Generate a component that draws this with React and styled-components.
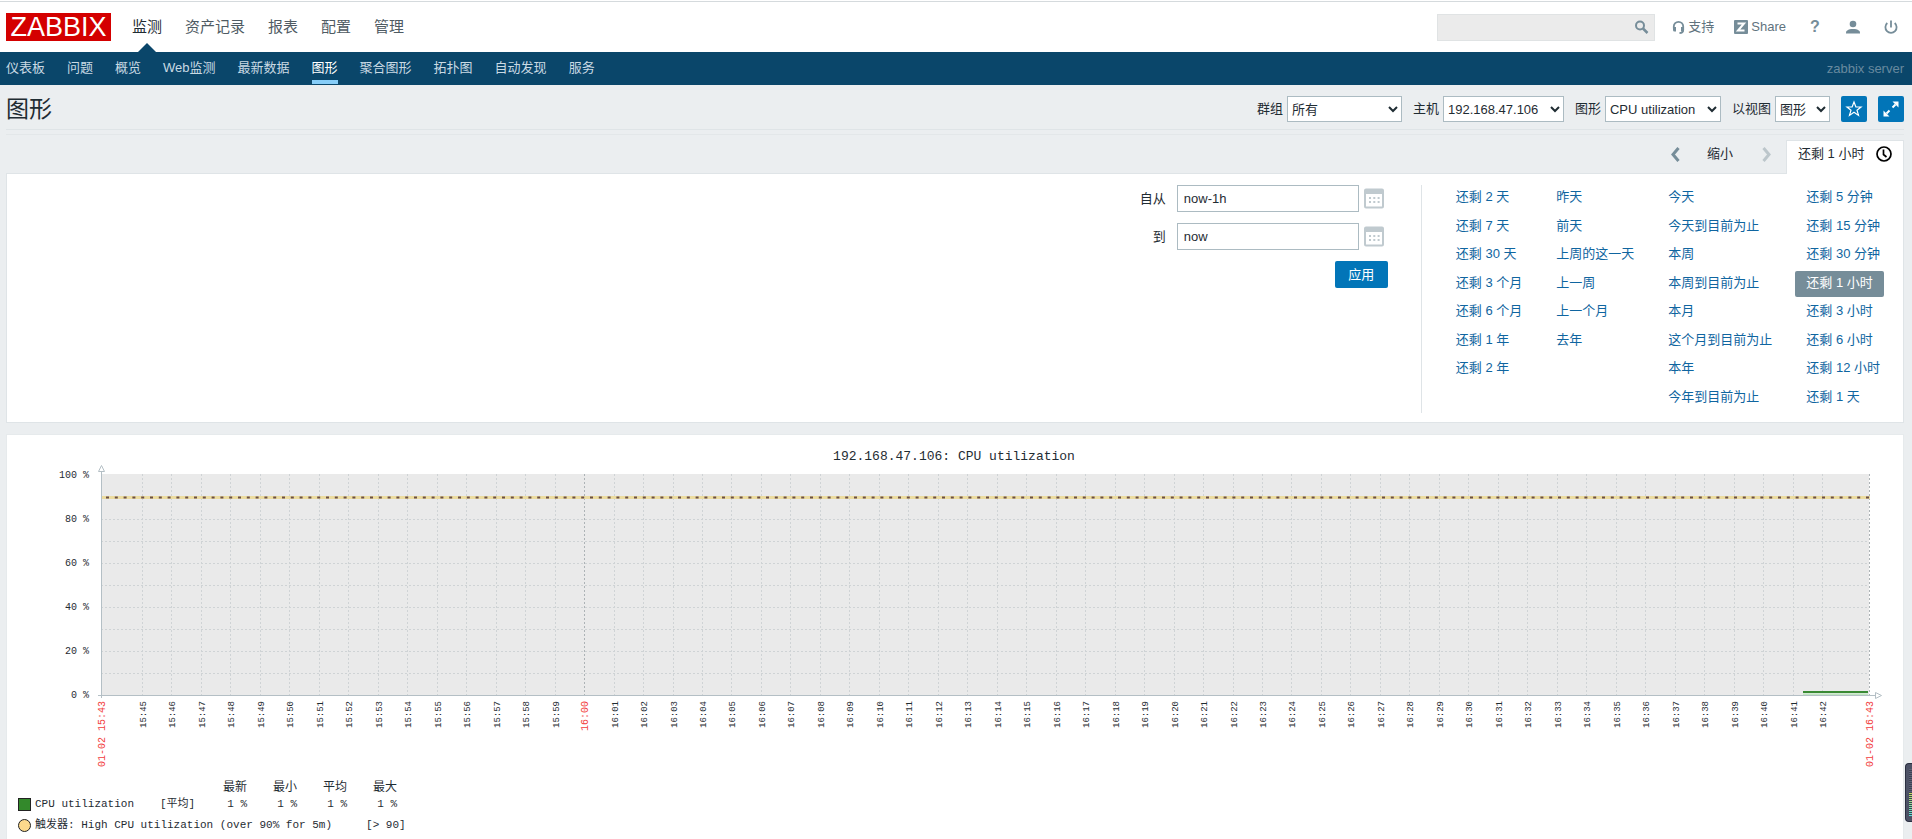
import React from 'react';
import styled, { createGlobalStyle, css } from 'styled-components';

const sans = '"Liberation Sans", "Noto Sans CJK SC", Arial, sans-serif';
const mono = '"Liberation Mono", "Noto Sans CJK SC", monospace';

const GlobalStyle = createGlobalStyle`
  *, *::before, *::after { box-sizing: border-box; }
  body { margin: 0; background: #ebeef0; color: #1f2c33; font: 13px/20px ${sans}; }
  button, input, select { font: inherit; color: inherit; }
  a { text-decoration: none; }
  svg { display: block; flex: none; }
`;

const Page = styled.div`
  display: flex;
  flex-direction: column;
  min-height: 100vh;
`;

const Masthead = styled.header`
  padding-top: 1px;
  background: #fff;
`;

const TopBar = styled.div`
  display: flex;
  align-items: center;
  height: 51px;
  padding: 0 12px 0 6px;
  border-top: 1px solid #d5dadd;
`;

const Logo = styled.a`
  width: 105px;
  height: 28px;
  margin-right: 21px;
  background: #d40000;
  color: #fff;
  font-size: 27px;
  line-height: 29px;
  text-align: center;
`;

const MainNav = styled.nav`
  display: flex;
  gap: 23px;
  align-self: stretch;
`;

const MainLink = styled.a`
  position: relative;
  display: flex;
  align-items: center;
  font-size: 15px;
  line-height: 20px;
  color: ${p => (p.$active ? '#1f2c33' : '#4f5b63')};
  ${p => p.$active && css`
    &::after {
      content: '';
      position: absolute;
      bottom: 0;
      left: 50%;
      margin-left: -9px;
      border: 9px solid transparent;
      border-top: 0;
      border-bottom-color: #0a466a;
    }
  `}
`;

const SearchForm = styled.form`
  display: flex;
  align-items: center;
  width: 218px;
  height: 27px;
  margin-left: auto;
  padding-right: 5px;
  background: #ebebeb;
  border: 1px solid #e0e3e4;
`;

const SearchInput = styled.input`
  flex: 1;
  min-width: 0;
  height: 100%;
  padding: 0 6px;
  border: 0;
  background: none;
`;

const BareButton = styled.button`
  display: flex;
  align-items: center;
  justify-content: center;
  padding: 0;
  border: 0;
  background: none;
  color: #768d99;
`;

const Tools = styled.nav`
  display: flex;
  align-items: center;
  gap: 20px;
  padding-left: 17px;
`;

const ToolLink = styled.a`
  display: flex;
  align-items: center;
  gap: 3px;
  color: #5f737e;
`;

const ToolIcon = styled.a`
  display: flex;
  justify-content: center;
  width: 18px;
  color: #768d99;
  font-size: 16px;
  font-weight: 700;
`;

const SubBar = styled.div`
  display: flex;
  align-items: stretch;
  justify-content: space-between;
  height: 33px;
  padding: 0 8px 0 6px;
  background: #0a466a;
`;

const SubNav = styled.nav`
  display: flex;
  gap: 22px;
`;

const SubLink = styled.a`
  display: flex;
  align-items: center;
  padding-top: 4px;
  border-bottom: 4px solid ${p => (p.$active ? '#86cdf8' : 'transparent')};
  margin-bottom: 1px;
  color: ${p => (p.$active ? '#fff' : '#c9dae4')};
`;

const ServerName = styled.span`
  align-self: center;
  color: #688a9f;
`;

const TitleRow = styled.div`
  display: flex;
  align-items: center;
  height: 45px;
  margin: 0 8px 0 6px;
  padding-top: 4px;
  border-bottom: 1px solid #dfe4e7;
`;

const Title = styled.h1`
  margin: 0 auto 0 0;
  font-size: 23px;
  line-height: 28px;
  font-weight: 400;
`;

const Filters = styled.form`
  display: flex;
  align-items: center;
  gap: 11px;
`;

const Field = styled.label`
  display: flex;
  align-items: center;
  gap: 4px;
`;

const Select = styled.select`
  width: ${p => p.$width}px;
  height: 26px;
  padding: 0 4px 0 0;
  border: 1px solid #acbbc2;
  border-radius: 0;
  background-color: #fff;
`;

const IconButton = styled.button`
  display: flex;
  align-items: center;
  justify-content: center;
  width: 26px;
  height: 26px;
  padding: 0;
  border: 0;
  border-radius: 2px;
  background: #0275b8;
  color: #fff;
`;

const TimeBar = styled.div`
  display: flex;
  justify-content: flex-end;
  align-items: center;
  height: 39px;
  margin: 4px 8px 0 6px;
  border-top: 1px solid #e3e7e9;
`;

const ZoomButton = styled(BareButton)`
  margin-right: ${p => p.$after}px;
  color: ${p => p.$color};
`;

const TimeTab = styled.a`
  position: relative;
  display: flex;
  align-self: flex-end;
  align-items: center;
  justify-content: space-between;
  width: 118px;
  height: 34px;
  margin-bottom: -1px;
  padding: 0 11px 8px 11px;
  border: 1px solid #dfe4e7;
  border-bottom: 0;
  background: #fff;
  color: #1f2c33;
`;

const FilterPanel = styled.section`
  display: flex;
  justify-content: flex-end;
  margin: 0 8px 0 6px;
  padding: 11px 12px 9px;
  background: #fff;
  border: 1px solid #dfe4e7;
`;

const RangeForm = styled.form`
  display: flex;
  flex-direction: column;
  gap: 11px;
  padding-right: 33px;
`;

const RangeRow = styled.div`
  display: flex;
  align-items: center;
  justify-content: flex-end;
`;

const RangeInput = styled.input`
  width: 182px;
  height: 27px;
  margin: 0 5px 0 11px;
  padding: 0 6px;
  border: 1px solid #acbbc2;
`;

const CalendarButton = styled(BareButton)`
  width: 20px;
  margin-right: 4px;
  color: #c0cacf;
`;

const ApplyButton = styled.button`
  align-self: flex-end;
  width: 53px;
  height: 27px;
  padding: 0;
  border: 0;
  border-radius: 2px;
  background: #0275b8;
  color: #fff;
`;

const Presets = styled.div`
  display: flex;
  gap: 12px;
  height: 228px;
  padding: 0 0 2px 23px;
  border-left: 1px solid #dfe4e7;
`;

const PresetColumn = styled.ul`
  display: grid;
  grid-template-rows: repeat(8, 26px);
  justify-items: start;
  align-content: space-between;
  margin: 0;
  padding: 0;
  list-style: none;
`;

const Preset = styled.a`
  display: block;
  padding: 0 11px 2px;
  border-radius: 2px;
  line-height: 24px;
  white-space: nowrap;
  color: ${p => (p.$active ? '#fff' : '#0f65a0')};
  background: ${p => (p.$active ? '#768d99' : 'none')};
`;

const ChartPanel = styled.section`
  flex: 1;
  margin: 11px 8px 0 6px;
  border: 1px solid #e6eaec;
  border-bottom: 0;
  background: #fff;
`;

const Chart = styled.svg`
  width: 100%;
  height: auto;
  font-family: ${mono};
  font-size: 10px;
  fill: #1f2c33;
`;

const Legend = styled.div`
  padding-left: 11px;
  font-family: ${mono};
  font-size: 11px;
  line-height: 16px;
`;

const LegendTable = styled.table`
  border-collapse: collapse;
  th, td { padding: 0; font-weight: 400; text-align: right; width: 50px; }
  thead th { font-size: 12px; }
  th:first-child { width: 142px; text-align: left; }
  td:nth-child(2) { text-align: left; width: 37px; }
`;

const LegendName = styled.span`
  display: flex;
  align-items: center;
  gap: 4px;
`;

const LegendTrigger = styled.div`
  display: flex;
  align-items: center;
  gap: 4px;
  margin-top: 5px;
`;

const Swatch = styled.i`
  width: 13px;
  height: 13px;
  border: 1px solid #222;
  border-radius: ${p => (p.$round ? '50%' : '0')};
  background: ${p => p.$color};
`;

const Constant = styled.span`
  margin-left: 30px;
`;

const Meter = styled.aside`
  position: fixed;
  right: 0;
  bottom: 17px;
  width: 7px;
  height: 59px;
  padding: 5px 0 5px 3px;
  border: 1px solid #2b2f40;
  border-right: 0;
  border-radius: 4px 0 0 4px;
  background: #4d5266;
`;

const MeterBars = styled.div`
  height: 100%;
  background:
    repeating-linear-gradient(transparent 0 1px, #3c4154 1px 2px),
    linear-gradient(#5d6276 0 50%, #c8dc5a 50%, #5ae0d8);
`;

const SearchIcon = () => (
  <svg width="15" height="15" viewBox="0 0 15 15" fill="none" stroke="currentColor">
    <circle cx="6" cy="5.500" r="4" strokeWidth="2" />
    <path d="M9 8.500l4.500 4.500" strokeWidth="2.500" />
  </svg>
);

const HeadsetIcon = () => (
  <svg width="13" height="15" viewBox="0 0 13 15">
    <path d="M1.800 8.500V6.500a4.700 4.700 0 0 1 9.400 0V10q0 3-3.700 3" fill="none" stroke="#768d99" strokeWidth="1.800" />
    <path d="M1 7h3v4.500H2.500Q1 11.500 1 10zM12 7H9v4.500h1.500q1.500 0 1.500-1.500z" fill="#768d99" />
  </svg>
);

const ShareIcon = () => (
  <svg width="14" height="14" viewBox="0 0 14 14">
    <rect width="14" height="14" rx="1" fill="#768d99" />
    <path d="M3.500 3.500h6.500L4 10.500h6.500" fill="none" stroke="#fff" strokeWidth="2" />
  </svg>
);

const UserIcon = () => (
  <svg width="14" height="14" viewBox="0 0 14 14" fill="currentColor">
    <circle cx="7" cy="4" r="3.300" />
    <path d="M0 13.500V12.500q0-2.500 5-3.500h4q5 1 5 3.500v1z" />
  </svg>
);

const PowerIcon = () => (
  <svg width="14" height="14" viewBox="0 0 14 14" fill="none" stroke="currentColor" strokeWidth="1.800">
    <path d="M3.300 3a5.600 5.600 0 1 0 7.400 0M7 0.500v7" />
  </svg>
);

const StarIcon = () => (
  <svg width="18" height="18" viewBox="0 0 18 18" fill="none" stroke="currentColor" strokeWidth="1.200">
    <path d="M9 2l1.900 5h5.100l-4 3.200 1.500 5.200L9 12.300l-4.500 3.100L6 10.200 2 7h5.100z" />
  </svg>
);

const ExpandIcon = () => (
  <svg width="16" height="16" viewBox="0 0 16 16" fill="currentColor">
    <path d="M9.500 0.500h6v6zM6.500 15.500h-6v-6z" />
    <path d="M9.500 6.500l3-3M6.500 9.500l-3 3" fill="none" stroke="currentColor" strokeWidth="2" />
  </svg>
);

const ArrowIcon = ({ right }) => (
  <svg width="10" height="15" viewBox="0 0 10 15" fill="none" stroke="currentColor" strokeWidth="3">
    <path d={right ? 'M1.500 1l5.500 6.500-5.500 6.500' : 'M8.500 1l-5.500 6.500 5.500 6.500'} />
  </svg>
);

const ClockIcon = () => (
  <svg width="16" height="16" viewBox="0 0 16 16" fill="none" stroke="#000" strokeWidth="1.700">
    <circle cx="8" cy="8" r="7" />
    <path d="M7.500 3.500V8.500l3 2.500" />
  </svg>
);

const CalendarIcon = () => (
  <svg width="20" height="21" viewBox="0 0 20 21">
    <rect x="1" y="1.500" width="18" height="18" rx="1" fill="none" stroke="currentColor" strokeWidth="2" />
    <path d="M1 1h18v5H1z" fill="currentColor" />
    <path d="M5 10h11M5 14h11" fill="none" stroke="currentColor" strokeWidth="2" strokeDasharray="2 2.300" />
  </svg>
);

const mainItems = ['监测', '资产记录', '报表', '配置', '管理'];
const subItems = ['仪表板', '问题', '概览', 'Web监测', '最新数据', '图形', '聚合图形', '拓扑图', '自动发现', '服务'];

const filters = [
  { label: '群组', value: '所有', width: 115 },
  { label: '主机', value: '192.168.47.106', width: 121 },
  { label: '图形', value: 'CPU utilization', width: 116 },
  { label: '以视图', value: '图形', width: 55 },
];

const presets = [
  ['还剩 2 天', '还剩 7 天', '还剩 30 天', '还剩 3 个月', '还剩 6 个月', '还剩 1 年', '还剩 2 年'],
  ['昨天', '前天', '上周的这一天', '上一周', '上一个月', '去年'],
  ['今天', '今天到目前为止', '本周', '本周到目前为止', '本月', '这个月到目前为止', '本年', '今年到目前为止'],
  ['还剩 5 分钟', '还剩 15 分钟', '还剩 30 分钟', '还剩 1 小时', '还剩 3 小时', '还剩 6 小时', '还剩 12 小时', '还剩 1 天'],
];

const plot = { left: 94, right: 1862, top: 39, bottom: 260 };
const minutes = Array.from({ length: 58 }, (_, i) => {
  const total = 15 * 60 + 45 + i;
  const label = `${Math.floor(total / 60)}:${String(total % 60).padStart(2, '0')}`;
  return { label, hour: total % 60 === 0, x: Math.round(135 + i * 29.474) };
});

const TimeLabel = ({ x, red, children }) => (
  <text
    transform={`translate(${x + 4} 266) rotate(-90)`}
    textAnchor="end"
    fontSize={red ? 10 : 9}
    fill={red ? '#f23c3c' : '#1f2c33'}
  >
    {children}
  </text>
);

const CpuChart = () => (
  <Chart viewBox="0 0 1896 345" role="img" aria-label="192.168.47.106: CPU utilization">
    <text x="947" y="25" fontSize="13" textAnchor="middle">192.168.47.106: CPU utilization</text>
    <rect x={plot.left} y={plot.top} width={plot.right - plot.left} height={plot.bottom - plot.top} fill="#eaeaea" />
    <g stroke="#cfd3d5" strokeDasharray="2 2" shapeRendering="crispEdges">
      {[1, 2, 3, 4, 5, 6, 7, 8].map(n => (
        <line key={n} x1={plot.left} x2={plot.right} y1={260.5 - n * 22} y2={260.5 - n * 22} />
      ))}
      {minutes.map(m => (
        <line key={m.label} x1={m.x + 0.5} x2={m.x + 0.5} y1={plot.top} y2={plot.bottom} stroke={m.hour ? '#adb3b6' : '#cfd3d5'} />
      ))}
      <line x1="1862.5" x2="1862.5" y1={plot.top} y2={plot.bottom} stroke="#adb3b6" />
    </g>
    <line x1={plot.left} x2={plot.right + 1} y1="62.5" y2="62.5" stroke="#ecdca0" strokeWidth="3" />
    <line x1={plot.left + 5} x2={plot.right + 1} y1="62.5" y2="62.5" stroke="#6b4f45" strokeWidth="2" strokeDasharray="3 5.800" />
    <path d="M1796 259.500h65" stroke="#bfe6bf" strokeWidth="2" />
    <path d="M1796 257h65" stroke="#3a8a34" strokeWidth="2" />
    <g fill="#fff" stroke="#b4bfc5">
      <path d="M94.500 263V36M91 260.500h1779" />
      <path d="M91.500 36.500l3-6 3 6zM1868.500 257.500l6 3-6 3z" />
    </g>
    {[0, 20, 40, 60, 80, 100].map(v => (
      <text key={v} x="82" y={263 - v * 2.2} textAnchor="end">{v} %</text>
    ))}
    {minutes.map(m => <TimeLabel key={m.label} x={m.x} red={m.hour}>{m.label}</TimeLabel>)}
    <TimeLabel x={94} red>01-02 15:43</TimeLabel>
    <TimeLabel x={1862} red>01-02 16:43</TimeLabel>
  </Chart>
);

export default function App() {
  return (
    <Page>
      <GlobalStyle />
      <Masthead>
        <TopBar>
          <Logo href="#">ZABBIX</Logo>
          <MainNav>
            {mainItems.map((t, i) => <MainLink key={t} href="#" $active={i === 0}>{t}</MainLink>)}
          </MainNav>
          <SearchForm>
            <SearchInput aria-label="搜索" />
            <BareButton type="button" aria-label="搜索"><SearchIcon /></BareButton>
          </SearchForm>
          <Tools>
            <ToolLink href="#"><HeadsetIcon />支持</ToolLink>
            <ToolLink href="#"><ShareIcon />Share</ToolLink>
            <ToolIcon href="#">?</ToolIcon>
            <ToolIcon href="#" aria-label="用户"><UserIcon /></ToolIcon>
            <ToolIcon href="#" aria-label="退出"><PowerIcon /></ToolIcon>
          </Tools>
        </TopBar>
        <SubBar>
          <SubNav>
            {subItems.map(t => <SubLink key={t} href="#" $active={t === '图形'}>{t}</SubLink>)}
          </SubNav>
          <ServerName>zabbix server</ServerName>
        </SubBar>
      </Masthead>

      <TitleRow>
        <Title>图形</Title>
        <Filters>
          {filters.map(f => (
            <Field key={f.label}>
              {f.label}
              <Select $width={f.width}><option>{f.value}</option></Select>
            </Field>
          ))}
          <IconButton type="button" aria-label="收藏"><StarIcon /></IconButton>
          <IconButton type="button" aria-label="全屏"><ExpandIcon /></IconButton>
        </Filters>
      </TitleRow>

      <TimeBar>
        <ZoomButton type="button" aria-label="向前" $color="#768d99" $after={27}><ArrowIcon /></ZoomButton>
        <ZoomButton type="button" $color="#1f2c33" $after={29}>缩小</ZoomButton>
        <ZoomButton type="button" aria-label="向后" $color="#bcc6cb" $after={14}><ArrowIcon right /></ZoomButton>
        <TimeTab href="#">还剩 1 小时<ClockIcon /></TimeTab>
      </TimeBar>

      <FilterPanel>
        <RangeForm>
          <RangeRow>
            <label htmlFor="from">自从</label>
            <RangeInput id="from" defaultValue="now-1h" />
            <CalendarButton type="button" aria-label="选择开始时间"><CalendarIcon /></CalendarButton>
          </RangeRow>
          <RangeRow>
            <label htmlFor="to">到</label>
            <RangeInput id="to" defaultValue="now" />
            <CalendarButton type="button" aria-label="选择结束时间"><CalendarIcon /></CalendarButton>
          </RangeRow>
          <ApplyButton type="button">应用</ApplyButton>
        </RangeForm>
        <Presets>
          {presets.map(col => (
            <PresetColumn key={col[0]}>
              {col.map(t => <li key={t}><Preset href="#" $active={t === '还剩 1 小时'}>{t}</Preset></li>)}
            </PresetColumn>
          ))}
        </Presets>
      </FilterPanel>

      <ChartPanel>
        <CpuChart />
        <Legend>
          <LegendTable>
            <thead>
              <tr><th /><td /><th>最新</th><th>最小</th><th>平均</th><th>最大</th></tr>
            </thead>
            <tbody>
              <tr>
                <th scope="row"><LegendName><Swatch $color="#33892b" />CPU utilization</LegendName></th>
                <td>[平均]</td><td>1 %</td><td>1 %</td><td>1 %</td><td>1 %</td>
              </tr>
            </tbody>
          </LegendTable>
          <LegendTrigger>
            <Swatch $round $color="#fcd98c" />触发器: High CPU utilization (over 90% for 5m)
            <Constant>[&gt; 90]</Constant>
          </LegendTrigger>
        </Legend>
      </ChartPanel>

      <Meter aria-hidden="true"><MeterBars /></Meter>
    </Page>
  );
}
